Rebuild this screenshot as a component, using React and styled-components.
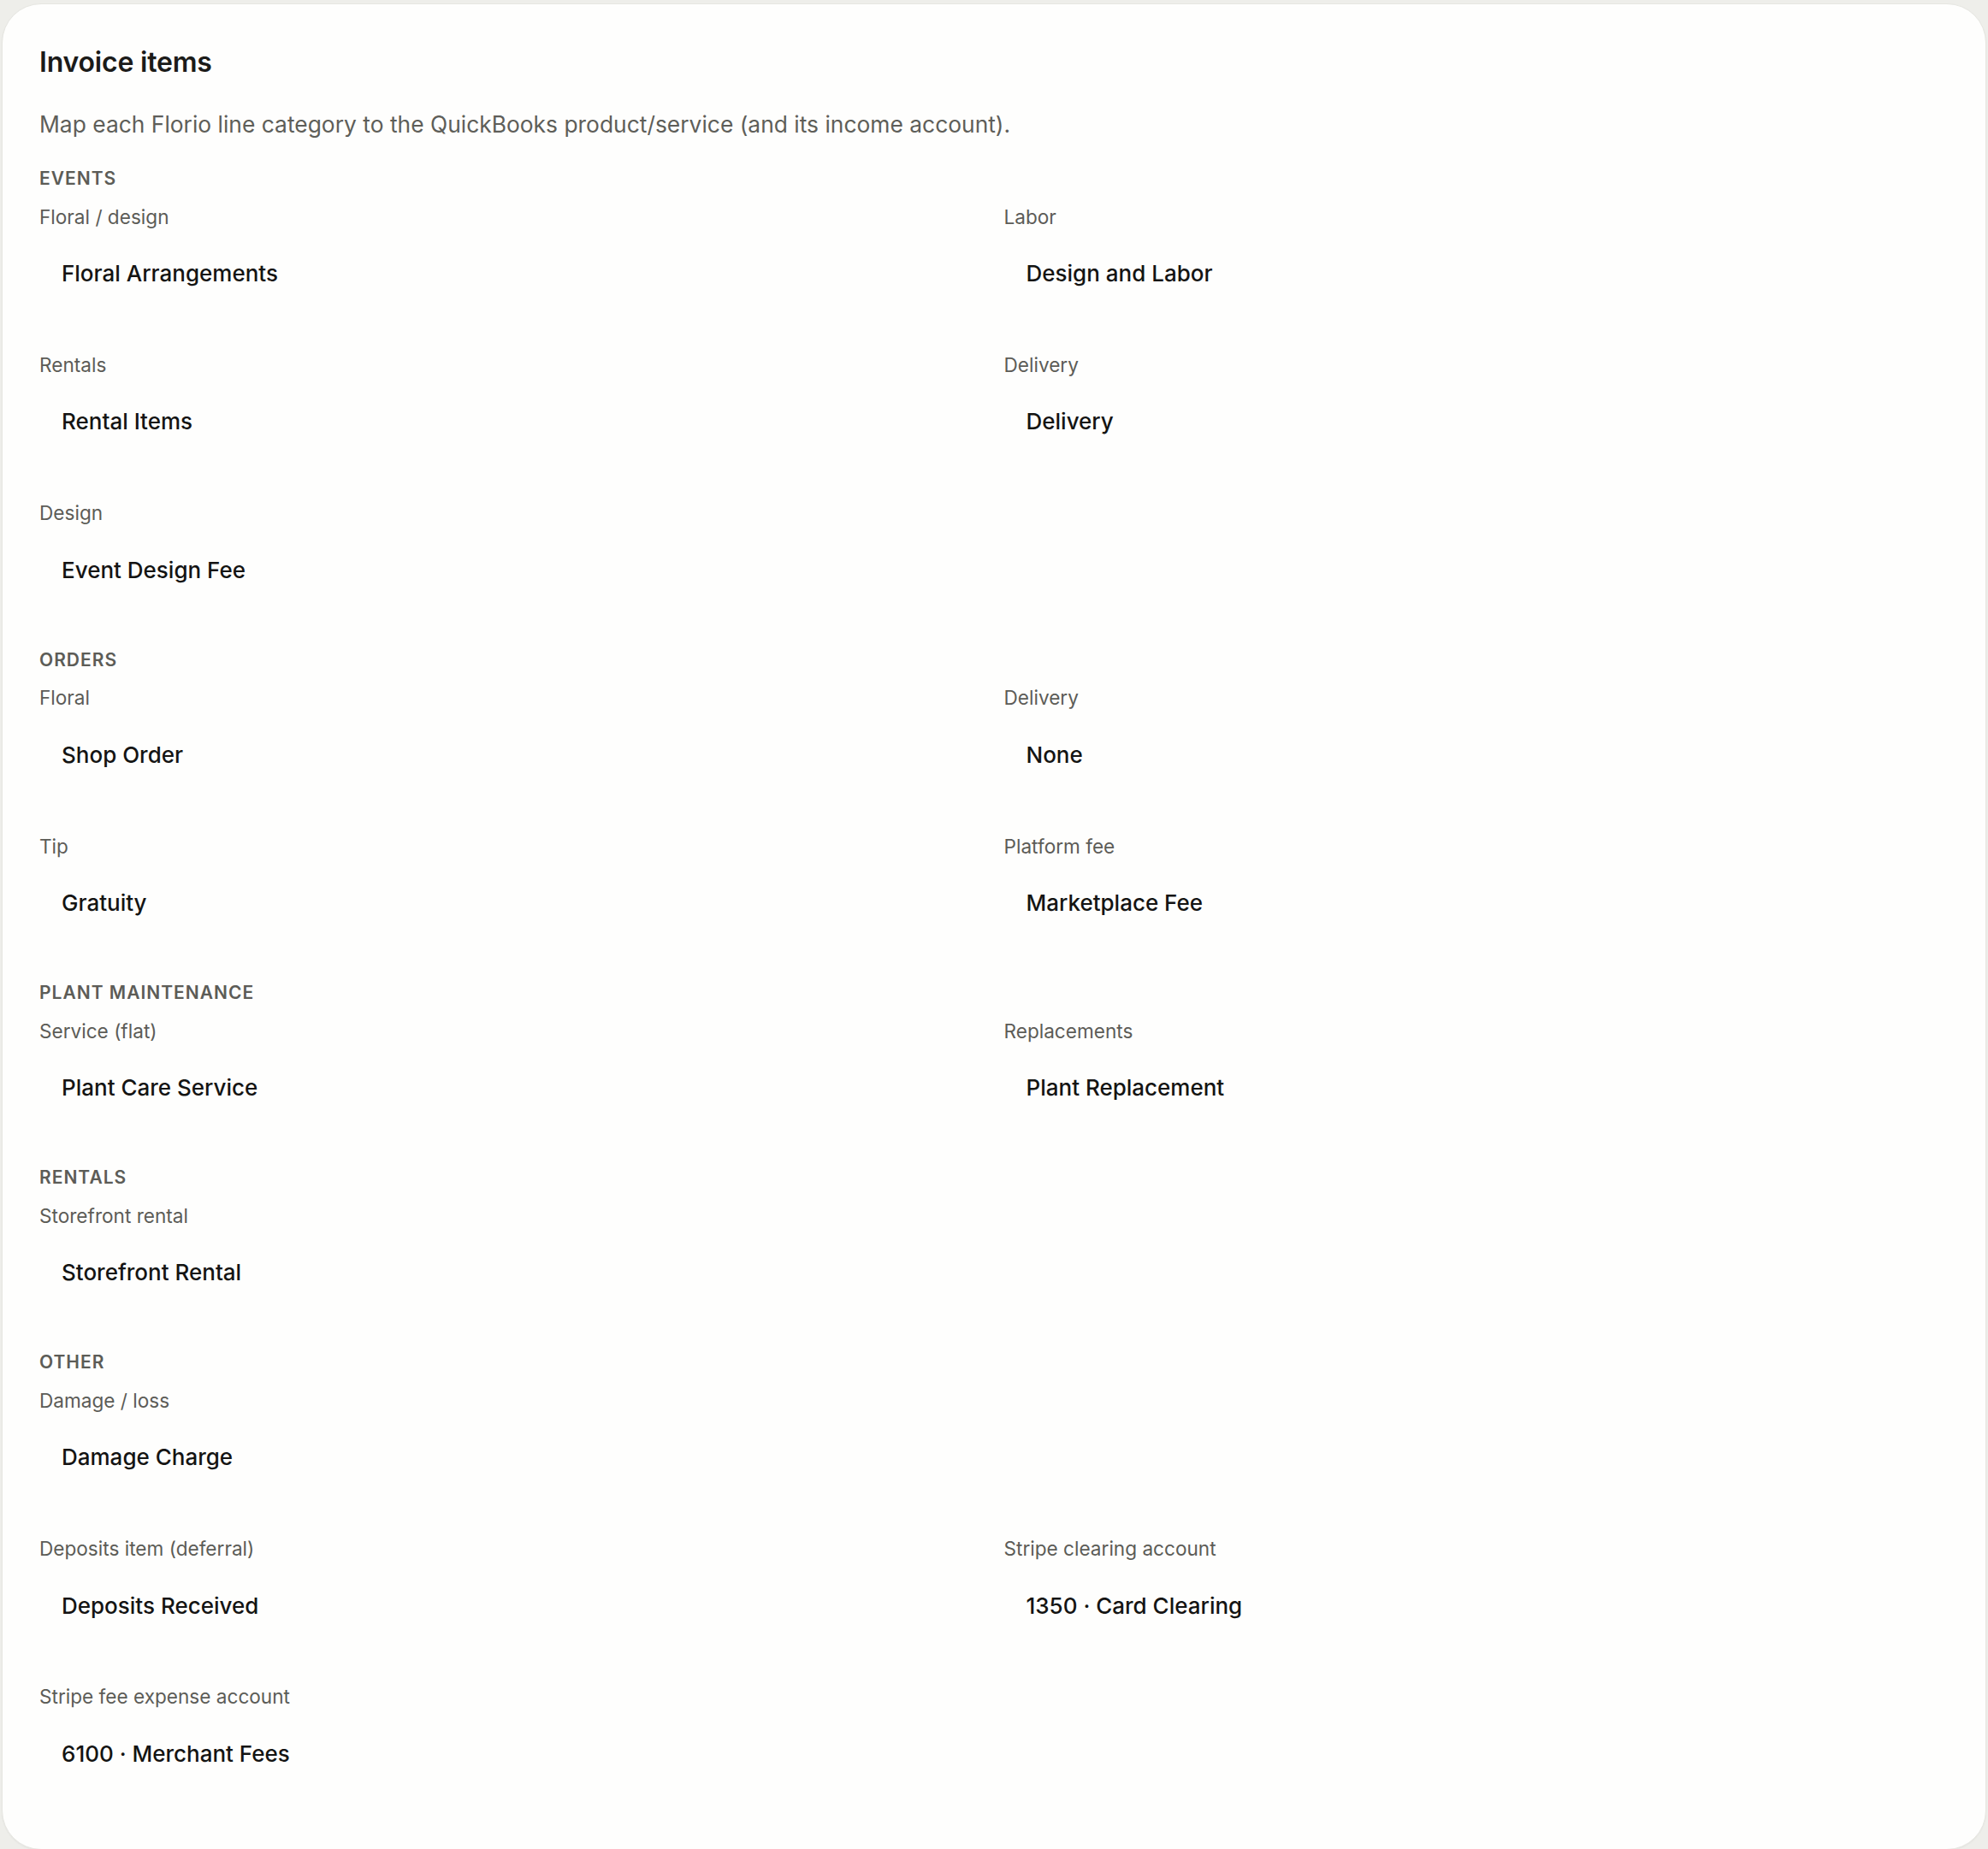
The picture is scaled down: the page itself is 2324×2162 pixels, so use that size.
import React from 'react';
import styled, { createGlobalStyle } from 'styled-components';

const GlobalStyle = createGlobalStyle`
  html, body {
    margin: 0;
    padding: 0;
    background: #eeeeea;
  }
  body {
    font-family: Inter, "Noto Sans", "Liberation Sans", sans-serif;
    -webkit-font-smoothing: antialiased;
  }
`;

const Page = styled.div`
  padding: 4px 2px 4px 2px;
`;

const Card = styled.section`
  background: #fefefd;
  border: 1px solid #e6e6e1;
  border-radius: 46px;
  padding: 46.5px 44px 79px 43px;
  box-shadow: 0 1px 2px rgba(0, 0, 0, 0.04);
`;

const Title = styled.h2`
  margin: 0;
  font-size: 32px;
  line-height: 42px;
  font-weight: 600;
  color: #1b1b19;
  letter-spacing: -0.2px;
`;

const Subtitle = styled.p`
  margin: 32px 0 0 0;
  font-size: 26.4px;
  line-height: 38px;
  color: #5e5e59;
`;

const Section = styled.div`
  margin-top: ${p => (p.first ? '31.5px' : '58.5px')};
`;

const SectionTitle = styled.div`
  font-size: 21px;
  line-height: 28px;
  font-weight: 600;
  letter-spacing: 1px;
  text-transform: uppercase;
  color: #5c5c57;
  margin-bottom: 15.5px;
`;

const Grid = styled.div`
  display: grid;
  grid-template-columns: 1fr 1fr;
  column-gap: 24px;
  row-gap: 59.4px;
`;

const Field = styled.div`
  display: flex;
  flex-direction: column;
`;

const Label = styled.label`
  font-size: 22.6px;
  line-height: 30px;
  color: #5c5c57;
  margin-bottom: 18px;
`;

const Value = styled.div`
  height: 66px;
  display: flex;
  align-items: center;
  padding: 0 26px;
  font-size: 26px;
  font-weight: 500;
  color: #141413;
  border-radius: 12px;
`;

const sections = [
  {
    title: 'Events',
    fields: [
      ['Floral / design', 'Floral Arrangements'],
      ['Labor', 'Design and Labor'],
      ['Rentals', 'Rental Items'],
      ['Delivery', 'Delivery'],
      ['Design', 'Event Design Fee'],
    ],
  },
  {
    title: 'Orders',
    fields: [
      ['Floral', 'Shop Order'],
      ['Delivery', 'None'],
      ['Tip', 'Gratuity'],
      ['Platform fee', 'Marketplace Fee'],
    ],
  },
  {
    title: 'Plant maintenance',
    fields: [
      ['Service (flat)', 'Plant Care Service'],
      ['Replacements', 'Plant Replacement'],
    ],
  },
  {
    title: 'Rentals',
    fields: [['Storefront rental', 'Storefront Rental']],
  },
  {
    title: 'Other',
    fields: [
      ['Damage / loss', 'Damage Charge'],
      null,
      ['Deposits item (deferral)', 'Deposits Received'],
      ['Stripe clearing account', '1350 · Card Clearing'],
      ['Stripe fee expense account', '6100 · Merchant Fees'],
    ],
  },
];

export default function App() {
  return (
    <Page>
      <GlobalStyle />
      <Card>
        <Title>Invoice items</Title>
        <Subtitle>
          Map each Florio line category to the QuickBooks product/service (and its income account).
        </Subtitle>
        {sections.map((s, i) => (
          <Section key={s.title} first={i === 0}>
            <SectionTitle>{s.title}</SectionTitle>
            <Grid>
              {s.fields.map((f, j) =>
                f ? (
                  <Field key={j}>
                    <Label>{f[0]}</Label>
                    <Value>{f[1]}</Value>
                  </Field>
                ) : (
                  <div key={j} />
                )
              )}
            </Grid>
          </Section>
        ))}
      </Card>
    </Page>
  );
}
